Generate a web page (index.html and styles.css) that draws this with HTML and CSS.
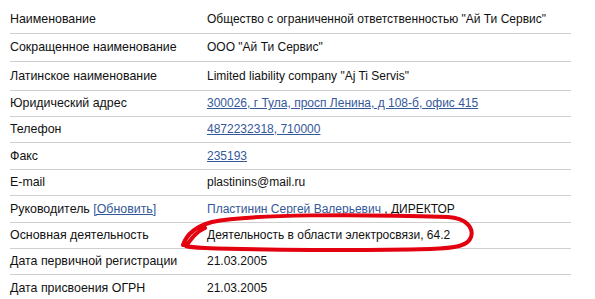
FILE: index.html
```html
<!DOCTYPE html>
<html lang="ru">
<head>
<meta charset="utf-8">
<title>Реквизиты</title>
<link rel="stylesheet" href="styles.css">
</head>
<body>
<div class="sheet">
  <div class="row h29"><div class="label">Наименование</div><div class="value">Общество с ограниченной ответственностью "Ай Ти Сервис"</div></div>
  <div class="row h28"><div class="label">Сокращенное наименование</div><div class="value">ООО "Ай Ти Сервис"</div></div>
  <div class="row h29"><div class="label">Латинское наименование</div><div class="value">Limited liability company "Aj Ti Servis"</div></div>
  <div class="row"><div class="label">Юридический адрес</div><div class="value"><a class="link" href="#">300026, г Тула, просп Ленина, д 108-б, офис 415</a></div></div>
  <div class="row"><div class="label">Телефон</div><div class="value"><a class="link" href="#">4872232318, 710000</a></div></div>
  <div class="row h27"><div class="label">Факс</div><div class="value"><a class="link" href="#">235193</a></div></div>
  <div class="row"><div class="label">E-mail</div><div class="value">plastinins@mail.ru</div></div>
  <div class="row h27"><div class="label">Руководитель <a class="link" href="#">[Обновить]</a></div><div class="value"><a class="link plain" href="#">Пластинин Сергей Валерьевич</a> , ДИРЕКТОР</div></div>
  <div class="row"><div class="label">Основная деятельность</div><div class="value">Деятельность в области электросвязи, 64.2</div></div>
  <div class="row"><div class="label">Дата первичной регистрации</div><div class="value">21.03.2005</div></div>
  <div class="row last"><div class="label">Дата присвоения ОГРН</div><div class="value">21.03.2005</div></div>
  <svg class="mark" width="595" height="299" viewBox="0 0 595 299">
    <path d="M183,245 C186,236 193,227 212,222 C250,214 360,214 448,217 C466,218 474,228 471,237 C468,246 456,248 430,249 C360,251 260,250 205,248 C195,247.5 189,247 186,246 C192,238 196,232 205,228"
      fill="none" stroke="#e3000f" stroke-width="4" stroke-linecap="round" stroke-linejoin="round"/>
  </svg>
</div>
</body>
</html>
```
FILE: styles.css
```css
html, body {
  margin: 0;
  padding: 0;
  background: #fff;
}
body {
  font-family: "Liberation Sans", Arial, sans-serif;
  font-size: 12px;
  color: #111;
}
.sheet {
  position: relative;
  width: 595px;
  height: 299px;
  overflow: hidden;
  padding: 5px 0 0 10px;
  box-sizing: border-box;
}
.row {
  display: grid;
  grid-template-columns: 197px 364px;
  align-items: center;
  height: 26px;
  box-sizing: border-box;
  border-bottom: 1px solid #cfcfcf;
  width: 561px;
}
.row.h29 { height: 29px; }
.row.h28 { height: 28px; }
.row.h27 { height: 27px; }
.row.last { border-bottom: 0; }
.label, .value {
  white-space: nowrap;
  line-height: 15px;
}
.label {
  font-size: 12.4px;
}
.link {
  color: #34589a;
  text-decoration: underline;
}
.link.plain {
  text-decoration: none;
}
.mark {
  position: absolute;
  left: 0;
  top: 0;
  pointer-events: none;
}
```
